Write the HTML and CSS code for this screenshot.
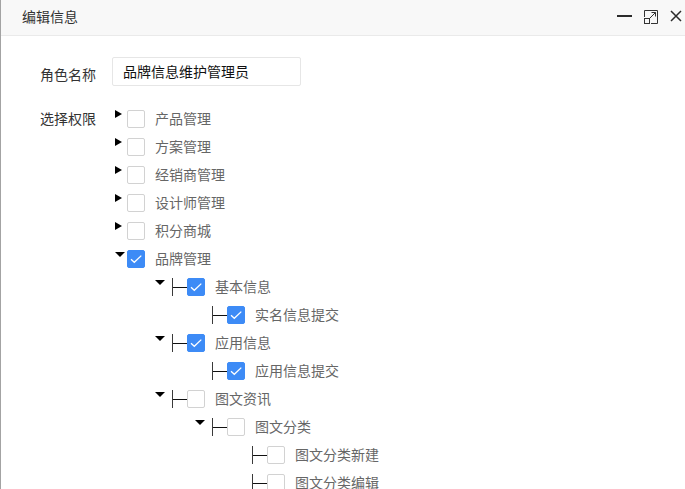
FILE: index.html
```html
<!DOCTYPE html>
<html lang="zh-CN">
<head>
<meta charset="utf-8">
<title>编辑信息</title>
<link rel="stylesheet" href="styles.css">
</head>
<body>
<div class="dialog">
  <div class="header">
    <span class="title">编辑信息</span>
    <div class="controls">
      <span class="ctl ctl-min"><svg width="16" height="4" viewBox="0 0 16 4"><line x1="0" y1="2" x2="15" y2="2" stroke="#2b2b2b" stroke-width="2"/></svg></span>
      <span class="ctl ctl-max"><svg width="14" height="14" viewBox="0 0 14 14" fill="none" stroke="#333" stroke-width="1"><polyline points="0.5,7 0.5,0.5 13.5,0.5 13.5,13.5 7,13.5"/><rect x="0.5" y="8.5" width="5" height="5"/><line x1="6" y1="8" x2="11.5" y2="2.5"/><polyline points="7.5,2.5 11.5,2.5 11.5,6.5"/></svg></span>
      <span class="ctl ctl-close"><svg width="12" height="12" viewBox="0 0 12 12"><path d="M1 1 L11 11 M11 1 L1 11" stroke="#2b2b2b" stroke-width="1.5"/></svg></span>
    </div>
  </div>
  <div class="content">
    <div class="form-row">
      <label class="label label-name">角色名称</label>
      <input class="name-input" type="text" value="品牌信息维护管理员">
    </div>
    <div class="form-row tree-row">
      <label class="label label-tree">选择权限</label>
      <ul class="tree">
        <li><div class="node lv0"><span class="toggle"><i class="tri-right"></i></span><span class="cb"></span><span class="text">产品管理</span></div></li>
        <li><div class="node lv0"><span class="toggle"><i class="tri-right"></i></span><span class="cb"></span><span class="text">方案管理</span></div></li>
        <li><div class="node lv0"><span class="toggle"><i class="tri-right"></i></span><span class="cb"></span><span class="text">经销商管理</span></div></li>
        <li><div class="node lv0"><span class="toggle"><i class="tri-right"></i></span><span class="cb"></span><span class="text">设计师管理</span></div></li>
        <li><div class="node lv0"><span class="toggle"><i class="tri-right"></i></span><span class="cb"></span><span class="text">积分商城</span></div></li>
        <li>
          <div class="node lv0"><span class="toggle"><i class="tri-down"></i></span><span class="cb checked"><svg width="18" height="18" viewBox="0 0 18 18"><polyline points="4,9.3 7.3,12.3 14.3,5.6" fill="none" stroke="#fff" stroke-width="1.3"/></svg></span><span class="text">品牌管理</span></div>
          <ul class="children">
            <li>
              <div class="node"><span class="toggle"><i class="tri-down"></i></span><span class="conn"></span><span class="cb checked"><svg width="18" height="18" viewBox="0 0 18 18"><polyline points="4,9.3 7.3,12.3 14.3,5.6" fill="none" stroke="#fff" stroke-width="1.3"/></svg></span><span class="text">基本信息</span></div>
              <ul class="children">
                <li><div class="node"><span class="toggle"></span><span class="conn"></span><span class="cb checked"><svg width="18" height="18" viewBox="0 0 18 18"><polyline points="4,9.3 7.3,12.3 14.3,5.6" fill="none" stroke="#fff" stroke-width="1.3"/></svg></span><span class="text">实名信息提交</span></div></li>
              </ul>
            </li>
            <li>
              <div class="node"><span class="toggle"><i class="tri-down"></i></span><span class="conn"></span><span class="cb checked"><svg width="18" height="18" viewBox="0 0 18 18"><polyline points="4,9.3 7.3,12.3 14.3,5.6" fill="none" stroke="#fff" stroke-width="1.3"/></svg></span><span class="text">应用信息</span></div>
              <ul class="children">
                <li><div class="node"><span class="toggle"></span><span class="conn"></span><span class="cb checked"><svg width="18" height="18" viewBox="0 0 18 18"><polyline points="4,9.3 7.3,12.3 14.3,5.6" fill="none" stroke="#fff" stroke-width="1.3"/></svg></span><span class="text">应用信息提交</span></div></li>
              </ul>
            </li>
            <li>
              <div class="node"><span class="toggle"><i class="tri-down"></i></span><span class="conn"></span><span class="cb"></span><span class="text">图文资讯</span></div>
              <ul class="children">
                <li>
                  <div class="node"><span class="toggle"><i class="tri-down"></i></span><span class="conn"></span><span class="cb"></span><span class="text">图文分类</span></div>
                  <ul class="children">
                    <li><div class="node"><span class="toggle"></span><span class="conn"></span><span class="cb"></span><span class="text">图文分类新建</span></div></li>
                    <li><div class="node"><span class="toggle"></span><span class="conn"></span><span class="cb"></span><span class="text">图文分类编辑</span></div></li>
                  </ul>
                </li>
              </ul>
            </li>
          </ul>
        </li>
      </ul>
    </div>
  </div>
</div>
</body>
</html>
```

FILE: styles.css
```css
html, body {
  margin: 0;
  padding: 0;
  height: 100%;
  overflow: hidden;
  background: #fff;
}

body {
  font-family: "Noto Sans CJK SC", "Noto Sans", sans-serif;
  font-size: 14px;
  color: #333;
}

.dialog {
  height: 100%;
  border-left: 1px solid #a3a3a3;
  box-sizing: border-box;
  overflow: hidden;
}

.header {
  height: 35px;
  background: #f8f8f8;
  border-bottom: 1px solid #eaeaea;
  display: flex;
  align-items: center;
  padding-left: 21px;
}

.title {
  font-size: 14px;
  color: #333;
  line-height: 20px;
  margin-top: -4px;
}

.controls {
  margin-left: auto;
  display: flex;
  align-items: center;
  margin-top: -3px;
}

.ctl {
  display: flex;
  align-items: center;
}

.ctl-min {
  margin-right: 11px;
}

.ctl-max {
  margin-right: 12px;
  margin-top: 1px;
}

.ctl-close {
  margin-right: 3px;
}

.content {
  padding: 21px 0 0 39px;
}

.form-row {
  display: flex;
  align-items: flex-start;
}

.label {
  width: 72px;
  color: #333;
  font-size: 14px;
}

.label-name {
  line-height: 20px;
  margin-top: 7px;
}

.name-input {
  box-sizing: border-box;
  width: 189px;
  height: 29px;
  border: 1px solid #e6e6e6;
  border-radius: 2px;
  padding: 0 10px 1px;
  font-family: "Noto Sans CJK SC", "Noto Sans", sans-serif;
  font-size: 14px;
  color: #111;
  outline: none;
  margin: 0;
}

.tree-row {
  margin-top: 19px;
}

.label-tree {
  line-height: 28px;
  margin-top: -1px;
}

.tree, .children {
  list-style: none;
  margin: 0;
  padding: 0;
}

.tree {
  padding-left: 3px;
}

.children {
  padding-left: 40px;
}

.node {
  height: 28px;
  display: flex;
  align-items: center;
}

.toggle {
  width: 17px;
  height: 28px;
  flex: none;
  position: relative;
}

.lv0 .toggle {
  width: 12px;
}

.tri-right {
  position: absolute;
  left: 0;
  top: 5px;
  width: 0;
  height: 0;
  border-left: 7px solid #000;
  border-top: 4.5px solid transparent;
  border-bottom: 4.5px solid transparent;
}

.tri-down {
  position: absolute;
  left: 0;
  top: 7px;
  width: 0;
  height: 0;
  border-top: 5px solid #000;
  border-left: 5px solid transparent;
  border-right: 5px solid transparent;
}

.conn {
  width: 15px;
  height: 18px;
  flex: none;
  position: relative;
  border-left: 1px solid #3a3a3a;
  box-sizing: border-box;
}

.conn::after {
  content: "";
  position: absolute;
  left: 0;
  right: 0;
  top: 9px;
  height: 1px;
  background: #111;
}

.cb {
  width: 18px;
  height: 18px;
  box-sizing: border-box;
  border: 1px solid #d2d2d2;
  border-radius: 2px;
  background: #fff;
  flex: none;
  position: relative;
}

.cb.checked {
  background: #3d8bf6;
  border-color: #3d8bf6;
}

.cb svg {
  position: absolute;
  left: -1px;
  top: -1px;
}

.text {
  margin-left: 10px;
  color: #666;
  line-height: 20px;
  padding-bottom: 2px;
  white-space: nowrap;
}
```
